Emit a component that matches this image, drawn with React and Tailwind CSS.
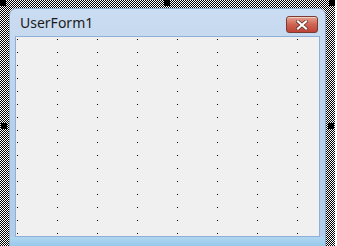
import React from 'react';

const cols = [2, 42, 82, 122, 162, 202, 242, 282];
const rows = Array.from({ length: 16 }, (_, i) => 3 + Math.round(i * 12.93));

function Handle({ className }) {
  return <div className={`absolute w-[6px] h-[6px] bg-black ${className}`} />;
}

export default function App() {
  return (
    <div className="w-[337px] h-[246px] bg-white overflow-hidden relative" style={{ fontFamily: '"Noto Sans", "Open Sans", sans-serif' }}>
      {/* selection hatch */}
      <div className="w-[335px] h-[260px] pl-[9px] pt-[8px] pr-[9px] bg-[conic-gradient(#000_25%,#fff_0_50%,#000_0_75%,#fff_0)] bg-[size:2px_2px]">
        {/* form window */}
        <div className="h-[252px] rounded-t-[7px] border border-[#8aa6c6] bg-gradient-to-b from-[#cadcf1] via-[#b8cfea] to-[#b2cbe8] flex flex-col">
          {/* title bar */}
          <div className="h-[27px] flex items-center justify-between pl-[10px] pr-[7px]">
            <span className="text-[14px] leading-none text-[#1b1b1b] pt-[1px]">UserForm1</span>
            <div className="w-[32px] h-[17px] mt-[4px] rounded-[3px] border border-[#7a3b32] bg-gradient-to-b from-[#e3a091] via-[#cf6453] to-[#bd4336] flex items-center justify-center shadow-[inset_0_1px_0_rgba(255,255,255,0.5)]">
              <svg width="12" height="10" viewBox="0 0 12 10">
                <path d="M2 1.5 L10 8.5 M10 1.5 L2 8.5" stroke="#5a2a22" strokeWidth="3.6" strokeLinecap="square" />
                <path d="M2 1.5 L10 8.5 M10 1.5 L2 8.5" stroke="#fff" strokeWidth="2.2" strokeLinecap="square" />
              </svg>
            </div>
          </div>
          {/* client area */}
          <div className="mx-[5px] border border-[#8fb0d6] h-[201px] bg-[#f0f0f0]">
            <svg width="303" height="199" className="block">
              {cols.map((x) =>
                rows.map((y) => (
                  <rect key={`${x}-${y}`} x={x - 1} y={y - 1} width="1" height="1" fill="#000" />
                ))
              )}
            </svg>
          </div>
          <div className="h-[10px] bg-gradient-to-b from-[#b0d6f0] to-[#98c9ea] border-b border-[#6fa9d4]" />
        </div>
      </div>
      <Handle className="left-0 top-0" />
      <Handle className="left-[164px] top-0" />
      <Handle className="left-[329px] top-0" />
      <Handle className="left-[1px] top-[123px]" />
      <Handle className="left-[328px] top-[123px]" />
    </div>
  );
}
